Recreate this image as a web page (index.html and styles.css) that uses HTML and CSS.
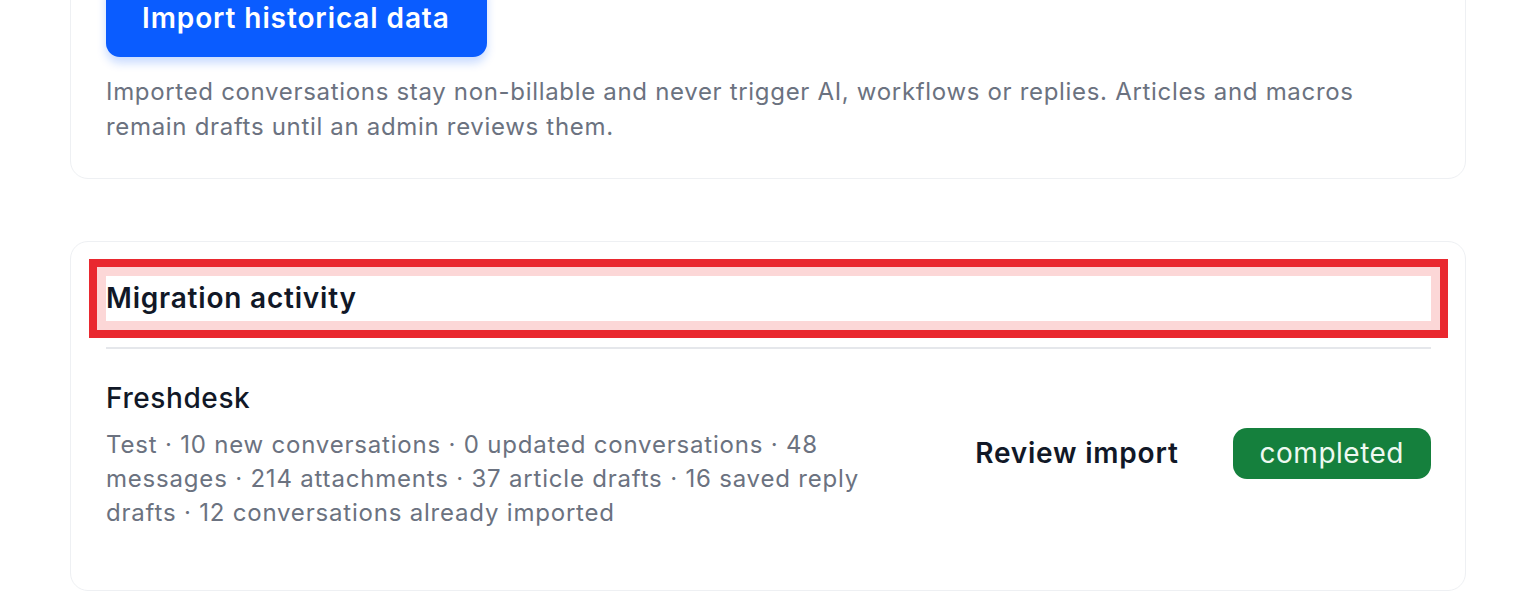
FILE: index.html
```html
<!DOCTYPE html>
<html lang="en">
<head>
<meta charset="utf-8">
<title>Migration</title>
<link rel="stylesheet" href="styles.css">
</head>
<body>
<main class="page">
  <section class="card card-import">
    <button class="btn-primary" type="button">Import historical data</button>
    <p class="note">Imported conversations stay non-billable and never trigger AI, workflows or replies. Articles and macros remain drafts until an admin reviews them.</p>
  </section>

  <section class="card card-activity">
    <h2 class="card-title highlight">Migration activity</h2>
    <div class="divider"></div>
    <div class="activity-row">
      <div class="activity-info">
        <div class="activity-name">Freshdesk</div>
        <p class="activity-meta">Test · 10 new conversations · 0 updated conversations · 48 messages · 214 attachments · 37 article drafts · 16 saved reply drafts · 12 conversations already imported</p>
      </div>
      <div class="activity-actions">
        <a class="link-review" href="#">Review import</a>
        <span class="badge-success">completed</span>
      </div>
    </div>
  </section>
</main>
</body>
</html>
```

FILE: styles.css
```css
* {
  box-sizing: border-box;
}

html, body {
  margin: 0;
  padding: 0;
  background: #ffffff;
}

body {
  font-family: Inter, "Noto Sans", "Liberation Sans", sans-serif;
  color: #111827;
  overflow: hidden;
}

.page {
  margin: -56px 70px 0 70px;
  display: flex;
  flex-direction: column;
  gap: 62px;
}

.card {
  background: #ffffff;
  border: 1px solid #eef0f3;
  border-radius: 18px;
  padding: 34px 34px 34px 35px;
}

.btn-primary {
  display: block;
  height: 78px;
  padding: 0 37px 0 36px;
  border: 0;
  border-radius: 14px;
  background: #0a5cff;
  color: #ffffff;
  font-family: inherit;
  font-size: 28px;
  font-weight: 600;
  letter-spacing: 0.9px;
  box-shadow: 0 6px 10px rgba(10, 92, 255, 0.22);
  cursor: pointer;
}

.note {
  margin: 18px 0 0 0;
  font-size: 24px;
  line-height: 34.5px;
  letter-spacing: 0.68px;
  color: #6b7280;
}

.card-activity {
  padding-bottom: 60px;
}

.card-title {
  margin: 0;
  height: 45px;
  line-height: 45px;
  font-size: 28px;
  font-weight: 600;
  letter-spacing: 0.8px;
  color: #111827;
}

.highlight {
  box-shadow: 0 0 0 9px #fcd7d7, 0 0 0 17px #e9282f;
}

.divider {
  margin-top: 26px;
  height: 2px;
  background: #e5e7eb;
}

.activity-row {
  display: flex;
  align-items: center;
  justify-content: space-between;
  padding-top: 31px;
}

.activity-info {
  max-width: 790px;
}

.activity-name {
  font-size: 28px;
  line-height: 36px;
  font-weight: 500;
  letter-spacing: 0.6px;
  color: #111827;
}

.activity-meta {
  margin: 12px 0 0 0;
  font-size: 24px;
  line-height: 34px;
  letter-spacing: 0.8px;
  color: #6b7280;
}

.activity-actions {
  display: flex;
  align-items: center;
  gap: 54px;
  margin-bottom: 4px;
}

.link-review {
  font-size: 28px;
  font-weight: 600;
  letter-spacing: 0.8px;
  color: #111827;
  text-decoration: none;
}

.badge-success {
  display: inline-flex;
  align-items: center;
  height: 51px;
  padding: 0 27px;
  border-radius: 14px;
  background: #15803d;
  color: #eef9f1;
  font-size: 28px;
  font-weight: 400;
  letter-spacing: 0.5px;
}
```
